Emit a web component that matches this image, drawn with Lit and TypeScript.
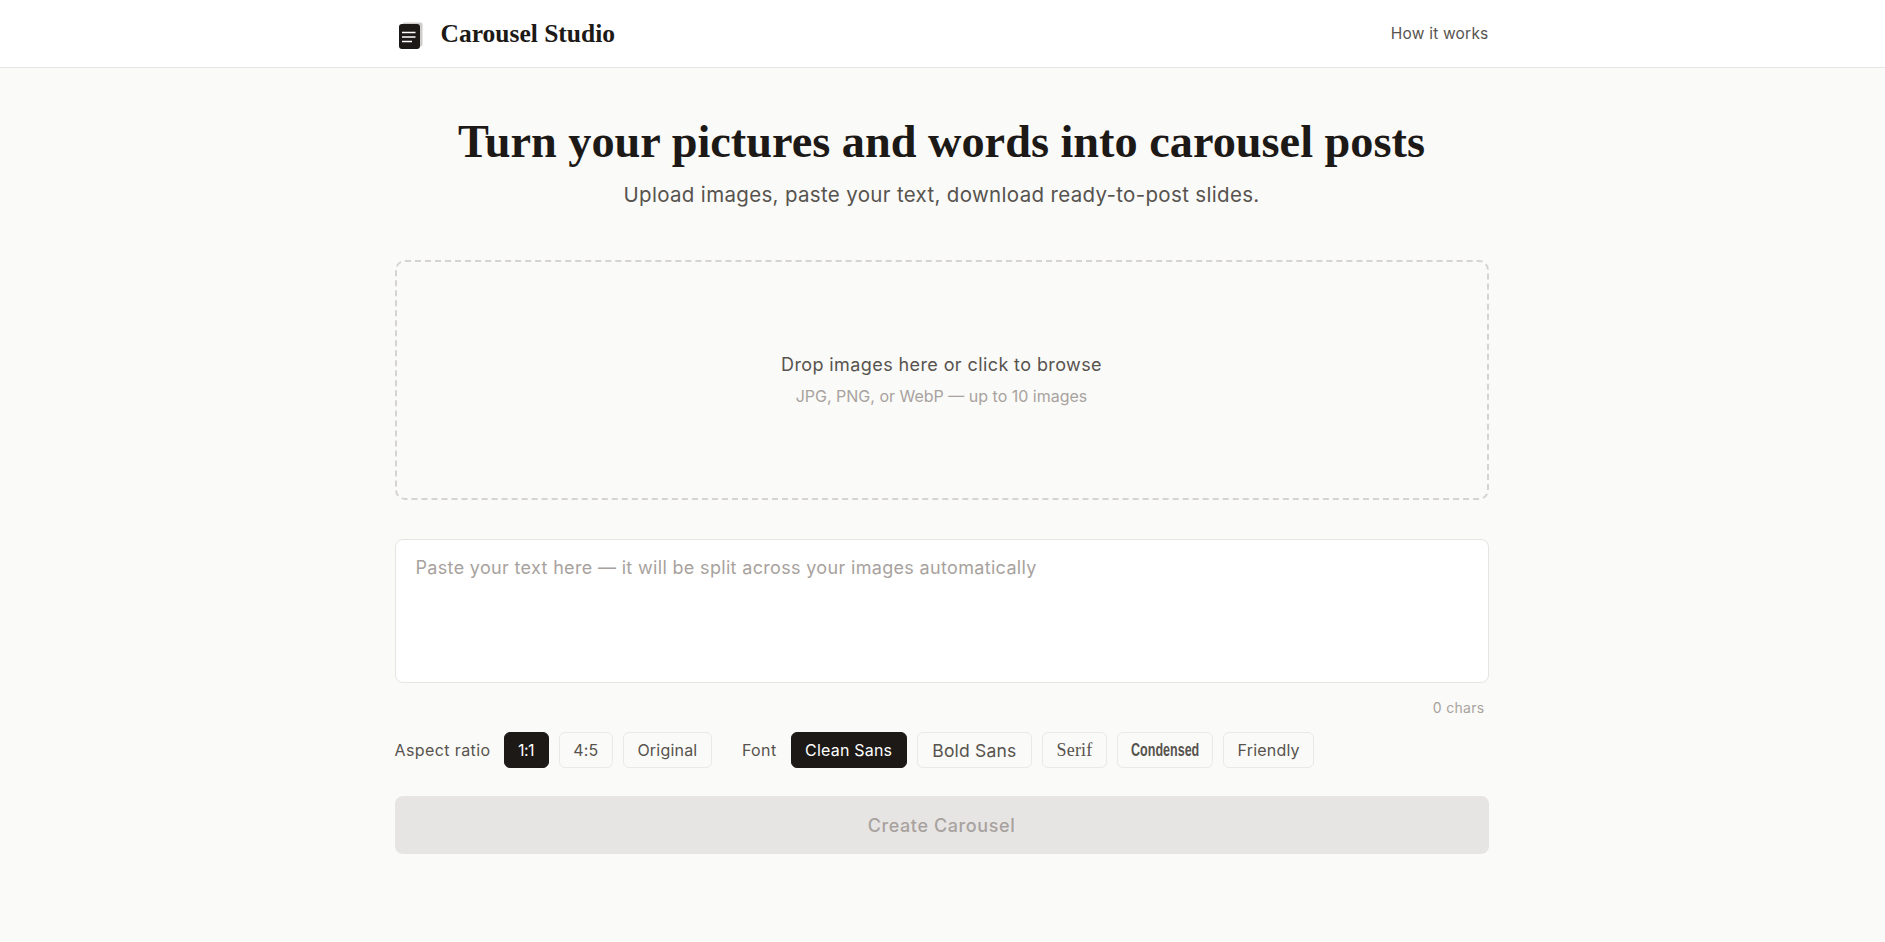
import { LitElement, html, css } from "lit";
import { customElement, state } from "lit/decorators.js";

const ratios = ["1:1", "4:5", "Original"];
const fonts = [
  { name: "Clean Sans", cls: "" },
  { name: "Bold Sans", cls: "bold" },
  { name: "Serif", cls: "serif" },
  { name: "Condensed", cls: "cond" },
  { name: "Friendly", cls: "" },
];

@customElement("app-root")
export class AppRoot extends LitElement {
  @state() ratio = "1:1";
  @state() font = "Clean Sans";

  static styles = css`
    :host {
      display: block;
      min-height: 942px;
      background: #fafaf8;
      color: #1c1917;
      font-family: Inter, "Noto Sans", sans-serif;
    }
    header {
      height: 68px;
      box-sizing: border-box;
      background: #fff;
      border-bottom: 1px solid #e7e5e4;
    }
    .bar {
      width: 1094px;
      height: 100%;
      margin: 0 auto;
      padding-right: 2px;
      display: flex;
      align-items: center;
      justify-content: space-between;
    }
    .brand {
      display: flex;
      align-items: center;
      gap: 16px;
      padding-left: 2px;
      font-family: "Liberation Serif", serif;
      font-weight: 700;
      font-size: 25.5px;
    }
    .brand svg { display: block; }
    .how { font-size: 15.5px; letter-spacing: 0.2px; color: #57534e; }
    main {
      width: 1094px;
      margin: 0 auto;
      padding: 48px 2px 0 0;
      display: flex;
      flex-direction: column;
    }
    h1 {
      margin: 0;
      text-align: center;
      font-family: "Liberation Serif", serif;
      font-size: 46.3px;
      line-height: 52px;
      font-weight: 700;
    }
    .sub {
      margin: 12px 0 0;
      text-align: center;
      font-size: 20.5px;
      letter-spacing: 0.33px;
      line-height: 30px;
      color: #57534e;
    }
    .drop {
      margin-top: 50px;
      height: 240px;
      box-sizing: border-box;
      border: 2px dashed #d6d3d1;
      border-radius: 10px;
      display: flex;
      flex-direction: column;
      align-items: center;
      justify-content: center;
      gap: 11px;
    }
    .drop .a { font-size: 18px; letter-spacing: 0.4px; color: #57534e; }
    .drop .b { font-size: 16px; color: #a8a29e; }
    textarea {
      display: block;
      margin-top: 39px;
      height: 144px;
      box-sizing: border-box;
      background: #fff;
      border: 1px solid #e7e5e4;
      border-radius: 8px;
      padding: 17px 20px 16px;
      font: inherit;
      font-size: 18px;
      letter-spacing: 0.33px;
      resize: none;
      outline: none;
    }
    textarea::placeholder { color: #a8a29e; opacity: 1; }
    .count {
      margin-top: 16px;
      padding-right: 4px;
      text-align: right;
      font-size: 14px;
      letter-spacing: 0.3px;
      color: #a8a29e;
    }
    .opts {
      margin-top: 16px;
      display: flex;
      align-items: center;
      gap: 10px;
      font-size: 16px;
    }
    .lab { color: #57534e; margin-right: 3px; letter-spacing: 0.4px; }
    .lab.f { margin-left: 20px; margin-right: 4px; }
    .chip {
      height: 36px;
      box-sizing: border-box;
      padding: 0 13.5px;
      background: none;
      border: 1px solid #ebe9e7;
      border-radius: 6px;
      color: #57534e;
      font: inherit;
      letter-spacing: 0.2px;
    }
    .chip.on { background: #1c1917; border-color: #1c1917; color: #fff; }
    .chip.tight { letter-spacing: -0.5px; }
    .chip.bold { font-size: 17.5px; padding: 0 14.5px; }
    .chip.serif { font-family: "Liberation Serif", serif; font-size: 18px; }
    .chip.cond { font-family: "Liberation Sans", sans-serif; font-weight: 700; font-size: 19px; letter-spacing: 0; }
    .chip.cond span {
      display: inline-block;
      width: 67px;
      white-space: nowrap;
      transform: scaleX(0.66);
      transform-origin: left;
    }
    .cta {
      margin-top: 28px;
      height: 58px;
      border: 0;
      border-radius: 8px;
      background: #e7e5e4;
      color: #a8a29e;
      font: inherit;
      font-size: 18px;
      letter-spacing: 0.6px;
      font-weight: 500;
    }
  `;

  render() {
    return html`
      <header>
        <div class="bar">
          <div class="brand">
            <svg width="28" height="32" viewBox="0 0 28 32">
              <rect x="5.500" y="4.500" width="20" height="24" rx="2" fill="#cfccc9" />
              <rect x="2" y="6" width="21" height="25" rx="3" fill="#1c1917" />
              <path d="M5 14.500h13.500M5 19h13.500M5 23.500h10" stroke="#fff" stroke-width="1.500" />
            </svg>
            Carousel Studio
          </div>
          <div class="how">How it works</div>
        </div>
      </header>
      <main>
        <h1>Turn your pictures and words into carousel posts</h1>
        <p class="sub">Upload images, paste your text, download ready-to-post slides.</p>
        <div class="drop">
          <div class="a">Drop images here or click to browse</div>
          <div class="b">JPG, PNG, or WebP — up to 10 images</div>
        </div>
        <textarea placeholder="Paste your text here — it will be split across your images automatically"></textarea>
        <div class="count">0 chars</div>
        <div class="opts">
          <span class="lab">Aspect ratio</span>
          ${ratios.map(
            (r) => html`<button class="chip ${r === "1:1" ? "tight" : ""} ${r === this.ratio ? "on" : ""}" @click=${() => (this.ratio = r)}>${r}</button>`
          )}
          <span class="lab f">Font</span>
          ${fonts.map(
            (f) => html`<button class="chip ${f.cls} ${f.name === this.font ? "on" : ""}" @click=${() => (this.font = f.name)}><span>${f.name}</span></button>`
          )}
        </div>
        <button class="cta" disabled>Create Carousel</button>
      </main>
    `;
  }
}
